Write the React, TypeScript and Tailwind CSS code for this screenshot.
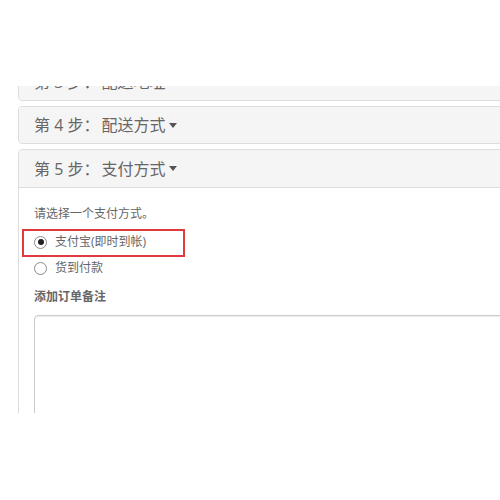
import React from 'react'

const font = { fontFamily: '"Open Sans", "Noto Sans CJK SC", sans-serif' }

function Caret() {
  return <span className="inline-block ml-[4px] align-middle w-0 h-0 border-t-[5px] border-t-[#555] border-x-[4px] border-x-transparent" />
}

function Heading({ step, title, tall }: { step: string; title: string; tall?: boolean }) {
  return (
    <div className={`${tall ? 'h-[37px]' : 'h-[36px]'} px-[15px] flex items-center bg-[#f5f5f5] text-[16px] text-[#666]`}>
      <span>{step}</span>
      <span className="ml-[2px]">{title}</span>
      <Caret />
    </div>
  )
}

function Radio({ label, checked }: { label: string; checked?: boolean }) {
  return (
    <label className="flex items-center h-[20px] gap-[8px]">
      <span className="w-[13px] h-[13px] rounded-full border border-[#8a8a8a] bg-white flex items-center justify-center">
        {checked && <span className="w-[6px] h-[6px] rounded-full bg-[#222]" />}
      </span>
      <span>{label}</span>
    </label>
  )
}

export default function App() {
  return (
    <div className="w-[500px] h-[500px] bg-white overflow-hidden" style={font}>
      <div className="mt-[86px] h-[327px] overflow-hidden">
        <div className="-mt-[23px] ml-[18px] w-[700px] flex flex-col gap-[5px]">
          <div className="border border-[#ddd] rounded-[4px] overflow-hidden">
            <Heading step="第 3 步：" title="配送地址" />
          </div>
          <div className="border border-[#ddd] rounded-[4px] overflow-hidden">
            <Heading step="第 4 步：" title="配送方式" />
          </div>
          <div className="border border-[#ddd] rounded-[4px] overflow-hidden">
            <div className="border-b border-[#ddd]">
              <Heading step="第 5 步：" title="支付方式" tall />
            </div>
            <div className="relative pt-[16px] px-[15px] text-[12px] leading-[20px] text-[#666]">
              <p className="mb-[8px]">请选择一个支付方式。</p>
              <Radio label="支付宝(即时到帐)" checked />
              <div className="mt-[6px]">
                <Radio label="货到付款" />
              </div>
              <p className="mt-[9px] mb-[8px] font-bold">添加订单备注</p>
              <div className="h-[200px] border border-[#ccc] rounded-[4px] shadow-[inset_0_1px_1px_rgba(0,0,0,0.075)] bg-white" />
              <div className="absolute left-[3px] top-[41px] w-[163px] h-[28px] border-2 border-[#e0393e]" />
            </div>
          </div>
        </div>
      </div>
    </div>
  )
}
